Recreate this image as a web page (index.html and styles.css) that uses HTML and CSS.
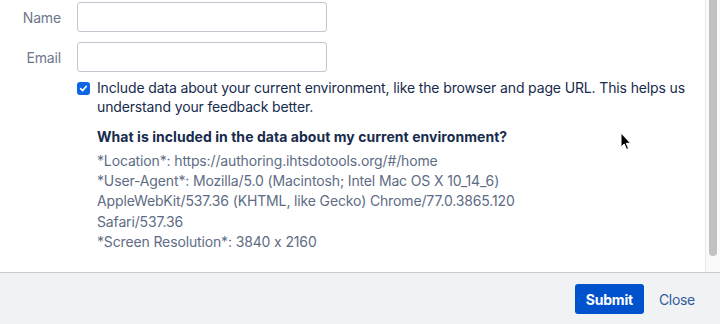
FILE: index.html
```html
<!DOCTYPE html>
<html lang="en">
<head>
<meta charset="utf-8">
<link rel="stylesheet" href="styles.css">
</head>
<body>
<div class="page">
  <div class="main">
    <div class="content">
      <div class="form">
        <label class="label">Name</label>
        <div class="input"></div>
        <label class="label">Email</label>
        <div class="input"></div>
        <div></div>
        <div class="check-row">
          <span class="checkbox"><svg width="9" height="9" viewBox="0 0 9 9"><path d="M1.6 4.7 L3.6 6.6 L7.4 2.3" fill="none" stroke="#fff" stroke-width="1.6" stroke-linecap="round" stroke-linejoin="round"/></svg></span>
          <div class="check-text">
            <p class="check-label">Include data about your current environment, like the browser and page URL. This helps us understand your feedback better.</p>
            <h4 class="env-title">What is included in the data about my current environment?</h4>
            <p class="env-data">*Location*: https://authoring.ihtsdotools.org/#/home<br>*User-Agent*: Mozilla/5.0 (Macintosh; Intel Mac OS X 10_14_6)<br>AppleWebKit/537.36 (KHTML, like Gecko) Chrome/77.0.3865.120<br>Safari/537.36<br>*Screen Resolution*: 3840 x 2160</p>
          </div>
        </div>
      </div>
    </div>
    <div class="scrollbar"><div class="thumb"></div></div>
  </div>
  <div class="footer">
    <button class="btn-primary">Submit</button>
    <button class="btn-link">Close</button>
  </div>
  <svg class="cursor" width="12" height="19" viewBox="0 0 12 19"><path d="M1 1 L1 15 L4.2 12 L6.6 17.4 L8.6 16.5 L6.3 11.3 L10.6 11.3 Z" fill="#000" stroke="#fff" stroke-width="1"/></svg>
</div>
</body>
</html>
```

FILE: styles.css
```css
* { box-sizing: border-box; }
html, body { margin: 0; padding: 0; background: #fff; }
body {
  font-family: Inter, "Noto Sans", "Liberation Sans", sans-serif;
  font-size: 14px;
  letter-spacing: -0.14px;
  font-feature-settings: "calt" 0;
  color: #172b4d;
}
.page {
  position: relative;
  width: 720px;
  height: 324px;
  display: flex;
  flex-direction: column;
  overflow: hidden;
}
.main {
  display: flex;
  height: 272px;
}
.content {
  flex: 1;
  padding-top: 2px;
}
.form {
  display: grid;
  grid-template-columns: 61px 250px;
  column-gap: 16px;
  row-gap: 10px;
  align-items: center;
}
.label {
  text-align: right;
  color: #6b778c;
  font-size: 14px;
}
.input {
  height: 30px;
  border: 1px solid #c1c7d0;
  border-radius: 3px;
  background: #fff;
}
.check-row {
  grid-column: 2 / span 1;
  display: flex;
  gap: 7px;
  width: 620px;
  margin-top: -4px;
}
.checkbox {
  flex: none;
  width: 13px;
  height: 13px;
  margin-top: 4px;
  border-radius: 3px;
  background: #0c66e4;
  display: flex;
  align-items: center;
  justify-content: center;
}
.checkbox svg { display: block; }
.check-text { flex: 1; }
.check-label {
  margin: 0;
  line-height: 19px;
  color: #172b4d;
}
.env-title {
  margin: 11px 0 0;
  font-size: 14px;
  font-weight: 700;
  letter-spacing: 0.05px;
  line-height: 20px;
  color: #172b4d;
}
.env-data {
  margin: 4px 0 0;
  line-height: 20.2px;
  color: #5e6c84;
}
.scrollbar {
  flex: none;
  width: 15px;
  border-left: 1px solid #e8e8e8;
  background: #fafafa;
  padding: 0 3px 0 3px;
}
.thumb {
  width: 8px;
  height: 256px;
  background: #c1c1c1;
  border-radius: 0 0 4px 4px;
}
.footer {
  flex: 1;
  border-top: 1px solid #c8ccd2;
  background: #f1f2f4;
  display: flex;
  justify-content: flex-end;
  align-items: flex-start;
  padding: 11px 17px 0 0;
  gap: 7px;
}
.btn-primary {
  height: 30px;
  padding: 0 11px;
  border: none;
  border-radius: 3px;
  background: #0052cc;
  color: #fff;
  font-family: inherit;
  font-size: 14px;
  font-weight: 700;
  letter-spacing: -0.2px;
}
.btn-link {
  height: 30px;
  padding: 0 8px;
  border: none;
  background: transparent;
  color: #2e5d9a;
  font-family: inherit;
  font-size: 14px;
  letter-spacing: -0.3px;
}
.cursor {
  position: absolute;
  left: 620px;
  top: 132px;
}
```
